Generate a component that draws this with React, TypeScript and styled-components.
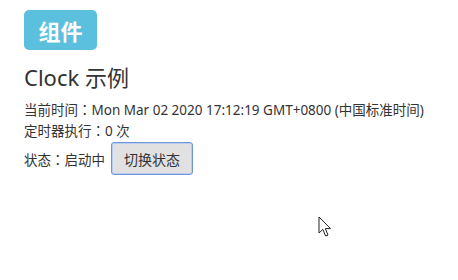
import React, { useState } from 'react'
import styled, { createGlobalStyle } from 'styled-components'

const GlobalStyle = createGlobalStyle`
  html, body {
    margin: 0;
    padding: 0;
    background: #fff;
  }
  body {
    font-family: "Noto Sans", "Noto Sans CJK SC", sans-serif;
    color: #333;
  }
`

// full-width colon centred in its box, like the original font
const Colon = () => <ColonMark>：</ColonMark>

const App = () => {
  const [running, setRunning] = useState(true)
  return (
    <Page>
      <GlobalStyle />
      <Badge>组件</Badge>
      <Title>Clock 示例</Title>
      <Line>当前时间<Colon />Mon Mar 02 2020 17:12:19 GMT+0800 (中国标准时间)</Line>
      <Line>定时器执行<Colon />0 次</Line>
      <StatusRow>
        <span>状态<Colon />{running ? '启动中' : '已停止'}</span>
        <ToggleButton onClick={() => setRunning(!running)}>切换状态</ToggleButton>
      </StatusRow>
      <Cursor width="14" height="22" viewBox="0 0 14 22">
        <path d="M1 1 L1 17 L4.8 13.4 L7.6 20 L10 19 L7.3 12.6 L12.5 12.6 Z" fill="#fff" stroke="#222" strokeWidth="1" strokeLinejoin="miter" />
      </Cursor>
    </Page>
  )
}

const Page = styled.div`
position: relative;
height: 280px;
padding: 10px 24px 0 24px;
box-sizing: border-box;
`

const Badge = styled.div`
display: inline-flex;
align-items: center;
justify-content: center;
width: 73px;
height: 40px;
background-color: #5bc0de;
color: #fff;
border-radius: 5px;
font-size: 22px;
font-weight: 700;
font-family: "Noto Sans CJK SC", sans-serif;
`

const Title = styled.h2`
margin: 13px 0 8px 0;
font-size: 22px;
font-weight: 400;
line-height: 28px;
color: #333;
`

const ColonMark = styled.span`
font-family: "Noto Sans CJK TC", sans-serif;
`

const Line = styled.div`
font-size: 13.5px;
line-height: 20px;
color: #333;
`

const StatusRow = styled.div`
display: flex;
align-items: center;
font-size: 13.5px;
color: #333;
margin-top: 1px;
`

const ToggleButton = styled.button`
margin-left: 6px;
height: 33px;
width: 82px;
padding: 0;
font-family: "Noto Sans CJK SC", sans-serif;
font-size: 14px;
color: #333;
background: #e1e1e1;
border: 1px solid #6d95d8;
border-radius: 3px;
box-shadow: inset 0 0 0 1px #b9cdee;
`

const Cursor = styled.svg`
position: absolute;
left: 318px;
top: 216px;
`

export default App
